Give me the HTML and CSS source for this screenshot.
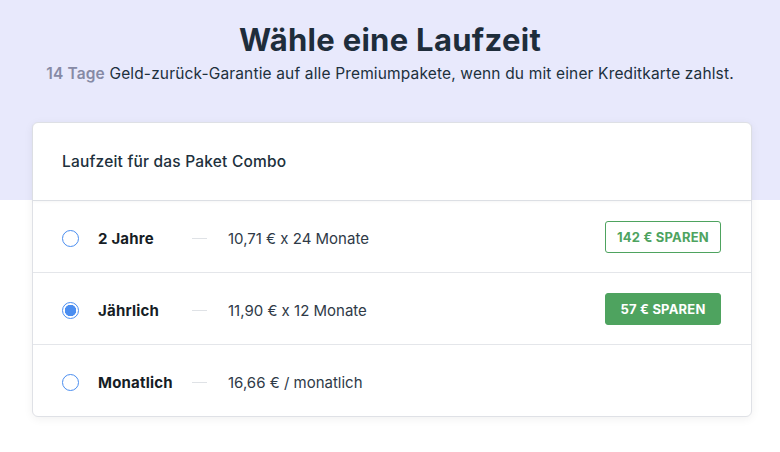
FILE: index.html
```html
<!DOCTYPE html>
<html lang="de">

<head>
    <meta charset="UTF-8">
    <meta name="viewport" content="width=device-width, initial-scale=1.0">
    <title>Wähle eine Laufzeit</title>
    <link rel="stylesheet" href="styles.css">
</head>

<body>
    <div class="page">
        <h1 class="title">Wähle eine Laufzeit</h1>
        <p class="subtitle"><span class="days">14 Tage</span> Geld-zurück-Garantie auf alle Premiumpakete, wenn du mit einer Kreditkarte zahlst.</p>

        <div class="card">
            <div class="card-head">Laufzeit für das Paket Combo</div>

            <label class="plan">
                <span class="radio"></span>
                <span class="name">2 Jahre</span>
                <span class="dash"></span>
                <span class="price">10,71 € x 24 Monate</span>
                <span class="badge">142 € SPAREN</span>
            </label>

            <label class="plan">
                <span class="radio checked"></span>
                <span class="name">Jährlich</span>
                <span class="dash"></span>
                <span class="price">11,90 € x 12 Monate</span>
                <span class="badge filled">57 € SPAREN</span>
            </label>

            <label class="plan">
                <span class="radio"></span>
                <span class="name">Monatlich</span>
                <span class="dash"></span>
                <span class="price">16,66 € / monatlich</span>
            </label>
        </div>
    </div>
</body>

</html>
```

FILE: styles.css
```css
* {
    margin: 0;
    padding: 0;
    box-sizing: border-box;
}

body {
    font-family: Inter, "Noto Sans", sans-serif;
    color: #20303c;
    background: linear-gradient(#e8e9fc 0, #e8e9fc 200px, #fff 200px);
    height: 452px;
}

.page {
    padding-top: 20px;
}

.title {
    text-align: center;
    font-size: 31px;
    font-weight: 700;
    line-height: 40px;
    color: #1e2d3b;
    letter-spacing: 0.3px;
}

.subtitle {
    margin-top: 4px;
    text-align: center;
    font-size: 15.5px;
    line-height: 20px;
    color: #20303c;
    letter-spacing: 0.15px;
}

.subtitle .days {
    font-weight: 600;
    color: #868aa5;
}

.card {
    margin: 38px 28px 0 32px;
    background: #fff;
    border: 1px solid #dfe1e6;
    border-radius: 6px;
    box-shadow: 0 2px 10px rgba(0, 0, 0, 0.06);
}

.card-head {
    height: 78px;
    padding-left: 29px;
    display: flex;
    align-items: center;
    font-size: 15.5px;
    font-weight: 500;
    color: #20303c;
    letter-spacing: 0.2px;
    border-bottom: 1px solid #dcdfe4;
    box-shadow: 0 1px 3px rgba(0, 0, 0, 0.04);
}

.plan {
    height: 72px;
    display: flex;
    align-items: center;
    padding: 3px 30px 0 29px;
    border-bottom: 1px solid #e4e6ea;
    cursor: pointer;
}

.plan:last-child {
    border-bottom: none;
    height: 71px;
}

.radio {
    width: 17px;
    height: 17px;
    border: 1px solid #4b8ef0;
    border-radius: 50%;
    background: #fff;
    flex-shrink: 0;
}

.radio.checked {
    background: radial-gradient(circle, #4b8ef0 0, #4b8ef0 5.5px, #fff 6px);
}

.name {
    margin-left: 19px;
    width: 94px;
    font-size: 15px;
    font-weight: 700;
    color: #161d25;
    letter-spacing: 0.2px;
}

.dash {
    width: 15px;
    height: 1px;
    background: #dfe2e6;
}

.price {
    margin-left: 21px;
    font-size: 15px;
    color: #2f3a47;
    flex: 1;
}

.badge {
    width: 116px;
    height: 32px;
    margin-top: -3px;
    display: flex;
    align-items: center;
    justify-content: center;
    border: 1px solid #4ea35f;
    border-radius: 3px;
    font-size: 13px;
    font-weight: 700;
    color: #4ea35f;
    letter-spacing: 0.2px;
}

.badge.filled {
    background: #4ea35f;
    color: #fff;
}
```
